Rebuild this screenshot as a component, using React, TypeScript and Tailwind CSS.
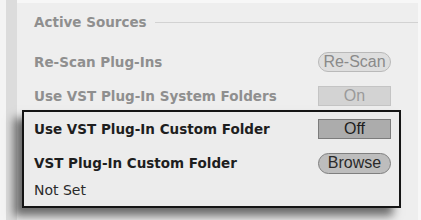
import React from 'react';

const labelFont = { fontFamily: '"DejaVu Sans", Verdana, sans-serif' };
const btnFont = { fontFamily: '"Liberation Sans", Arial, sans-serif' };

function Row({ label, dim, children }: { label: string; dim?: boolean; children: React.ReactNode }) {
  return (
    <div className="flex items-center justify-between h-[34px]">
      <span
        className={dim ? 'text-[13.5px] font-bold text-[#8f8f8f]' : 'text-[13.5px] font-bold text-[#1e1e1e]'}
        style={labelFont}
      >
        {label}
      </span>
      {children}
    </div>
  );
}

export default function App() {
  return (
    <div className="w-[421px] h-[220px] bg-[#f7f7f7] flex overflow-hidden" style={btnFont}>
      <div className="w-[6px] bg-[#f4f4f4]" />
      <div className="w-[11px] bg-[#dcdcdc]" />
      <div className="flex-1 bg-[#eeeeee] mt-[3px] mr-[3px] pt-[9px] pl-[17px] pr-[27px]">
        <div className="flex items-center gap-[8px] h-[20px] -mr-[27px]">
          <span className="text-[13.5px] font-bold text-[#8f8f8f]" style={labelFont}>
            Active Sources
          </span>
          <div className="flex-1 h-px bg-[#d2d2d2]" />
        </div>
        <div className="mt-[13px]">
          <Row label="Re-Scan Plug-Ins" dim>
            <div className="w-[73px] h-[20px] rounded-full border border-[#b9b9b9] bg-[#dedede] flex items-center justify-center text-[16px] text-[#8a8a8a]">
              Re-Scan
            </div>
          </Row>
          <Row label="Use VST Plug-In System Folders" dim>
            <div className="w-[73px] h-[20px] border border-[#c4c4c4] bg-[#d3d3d3] flex items-center justify-center text-[16px] text-[#9a9a9a]">
              On
            </div>
          </Row>
        </div>
        <div className="-ml-[12px] -mr-[10px] -mt-[3px] border-2 border-[#151515] bg-[#ececec] pl-[10px] pr-[8px] pb-[6px] shadow-[-8px_8px_9px_rgba(0,0,0,0.55)]">
          <Row label="Use VST Plug-In Custom Folder">
            <div className="w-[73px] h-[20px] border border-[#7c7c7c] bg-[#acacac] flex items-center justify-center text-[16px] text-[#1e1e1e]">
              Off
            </div>
          </Row>
          <Row label="VST Plug-In Custom Folder">
            <div className="w-[73px] h-[21px] rounded-full border border-[#7f7f7f] bg-[#bdbdbd] flex items-center justify-center text-[16px] text-[#2a2a2a]">
              Browse
            </div>
          </Row>
          <div className="h-[20px] flex items-center text-[14px] text-[#2a2a2a]" style={labelFont}>
            Not Set
          </div>
        </div>
      </div>
    </div>
  );
}
